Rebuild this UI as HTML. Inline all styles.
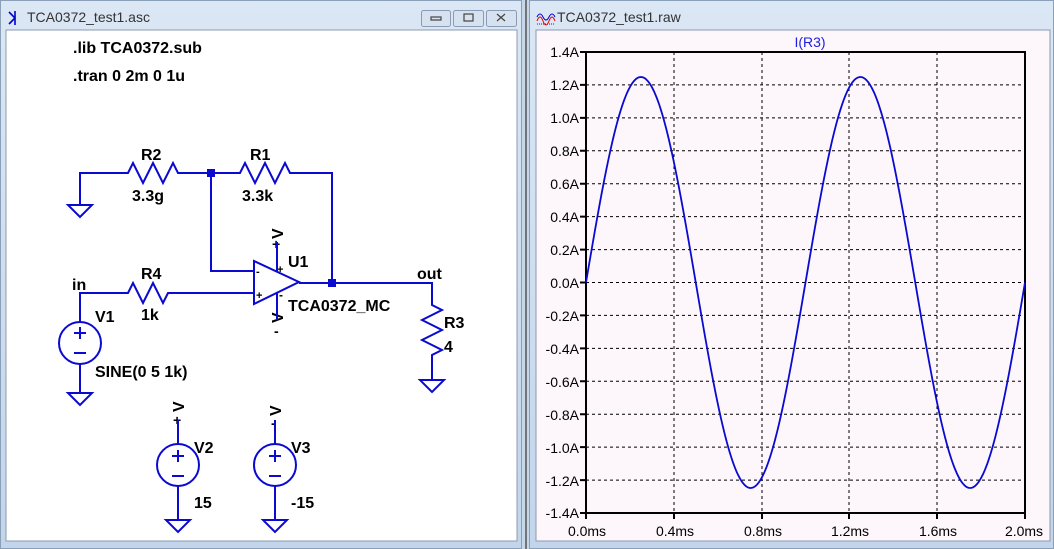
<!DOCTYPE html>
<html><head><meta charset="utf-8"><style>
body{margin:0;width:1054px;height:549px;overflow:hidden;background:#c6d7ea;font-family:"Liberation Sans",sans-serif}
svg{position:absolute;left:0;top:0}
</style></head><body>
<svg width="1054" height="549" viewBox="0 0 1054 549">
<defs>
<linearGradient id="tb" x1="0" y1="0" x2="0" y2="1"><stop offset="0" stop-color="#dbe7f4"/><stop offset="1" stop-color="#c3d5ea"/></linearGradient>
</defs>
<!-- left window -->
<rect x="0" y="0" width="522" height="549" fill="url(#tb)"/>
<rect x="0.5" y="0.5" width="521" height="548" fill="none" stroke="#8aa0b8"/>
<rect x="6" y="30" width="511" height="511" fill="#fff" stroke="#8a9bb0"/>
<text x="27" y="22" font-size="14" fill="#333">TCA0372_test1.asc</text>
<path d="M9 12 l6 6 l-6 6 M15 11 v14" stroke="#0000cc" stroke-width="1.6" fill="none"/>
<!-- buttons -->
<g fill="#d6e2ef" stroke="#8a9cb4">
<rect x="421.5" y="10.5" width="29" height="16" rx="2"/><rect x="453.5" y="10.5" width="30" height="16" rx="2"/><rect x="486.5" y="10.5" width="30" height="16" rx="2"/>
<rect x="951.5" y="10.5" width="29" height="16" rx="2"/><rect x="984.5" y="10.5" width="30" height="16" rx="2"/><rect x="1017.5" y="10.5" width="30" height="16" rx="2"/>
</g>
<g stroke="#444" fill="none" stroke-width="1.2">
<rect x="431" y="17" width="10" height="3"/><rect x="464" y="14" width="9" height="7"/><path d="M497 14 l8 7 M505 14 l-8 7"/>
<rect x="961" y="17" width="10" height="3"/><rect x="995" y="14" width="9" height="7"/><path d="M1028 14 l8 7 M1036 14 l-8 7"/>
</g>
<!-- splitter -->
<rect x="522" y="0" width="7" height="549" fill="#c6d7ea"/>
<line x1="526" y1="0" x2="526" y2="549" stroke="#555" stroke-width="1.5"/>
<!-- right window -->
<rect x="529" y="0" width="525" height="549" fill="url(#tb)"/>
<rect x="529.5" y="0.5" width="524" height="548" fill="none" stroke="#8aa0b8"/>
<rect x="536" y="30" width="514" height="511" fill="#fdf6fb" stroke="#8a9bb0"/>
<text x="557" y="22" font-size="14" fill="#333">TCA0372_test1.raw</text>
<path d="M537 21 q3 -8 6 0 t6 0 t6 0" stroke="#d00" fill="none"/><path d="M537 17 q3 -6 6 0 t6 0 t6 0" stroke="#00c" fill="none"/>
<path d="M537 24 h18" stroke="#333" stroke-dasharray="1,1"/>

<!-- schematic -->
<g font-family="Liberation Sans,sans-serif" font-weight="bold" font-size="16" fill="#000">
<text x="73" y="53">.lib TCA0372.sub</text>
<text x="73" y="81">.tran 0 2m 0 1u</text>
<text x="141" y="160">R2</text><text x="132" y="201">3.3g</text>
<text x="250" y="160">R1</text><text x="242" y="201">3.3k</text>
<text x="141" y="279">R4</text><text x="141" y="320">1k</text>
<text x="72" y="290">in</text>
<text x="95" y="322">V1</text>
<text x="95" y="377">SINE(0 5 1k)</text>
<text x="288" y="267">U1</text>
<text x="288" y="311">TCA0372_MC</text>
<text x="417" y="279">out</text>
<text x="444" y="328">R3</text><text x="444" y="352">4</text>
<text x="194" y="453">V2</text><text x="194" y="508">15</text>
<text x="291" y="453">V3</text><text x="291" y="508">-15</text>
<text transform="translate(283,239) rotate(-90)">V</text>
<text transform="translate(283,323) rotate(-90)">V</text>
<text transform="translate(184,412) rotate(-90)">V</text>
<text transform="translate(281,416) rotate(-90)">V</text>
</g>
<g font-family="Liberation Sans,sans-serif" font-weight="bold" font-size="14" fill="#000">
<text x="272" y="249">+</text><text x="274" y="336">-</text>
<text x="173" y="425">+</text><text x="271" y="428">-</text>
<text x="256" y="275" font-size="11">-</text><text x="256" y="299" font-size="11">+</text>
<text x="277" y="273" font-size="11">+</text><text x="279" y="299" font-size="12">-</text>
</g>
<g stroke="#0a0ad0" stroke-width="2" fill="none">
<path d="M80 205 V173 H128 l5 -10 l10 20 l10 -20 l10 20 l10 -20 l5 10 H240 l5 -10 l10 20 l10 -20 l10 20 l10 -20 l5 10 H332 V283"/>
<path d="M211 173 V271 H254"/>
<path d="M80 323 V293 H128 l5 -10 l10 20 l10 -20 l10 20 l5 -10 H254"/>
<circle cx="80" cy="343" r="21"/>
<path d="M80 364 V393"/>
<path d="M74 333 h12 M80 327 v12 M74 353 h12"/>
<path d="M254 261 V304 L299 282 Z"/>
<path d="M277 242 V272 M277 292 V320"/>
<path d="M299 283 H432 V305 l10 5 l-20 10 l20 10 l-20 10 l20 10 l-10 5 V380"/>
<path d="M178 420 V445 M178 486 V520"/><circle cx="178" cy="465" r="21"/>
<path d="M172 456 h12 M178 450 v12 M172 476 h12"/>
<path d="M275 420 V445 M275 486 V520"/><circle cx="275" cy="465" r="21"/>
<path d="M269 456 h12 M275 450 v12 M269 476 h12"/>
<path d="M68 205 h24 l-12 12 z M68 393 h24 l-12 12 z M420 380 h24 l-12 12 z M166 520 h24 l-12 12 z M263 520 h24 l-12 12 z"/>
</g>
<rect x="207" y="169" width="8" height="8" fill="#0a0ad0"/>
<rect x="328" y="279" width="8" height="8" fill="#0a0ad0"/>

<!-- plot -->
<text x="810" y="47" font-size="14" fill="#2020e0" text-anchor="middle">I(R3)</text>
<g stroke="#000" stroke-width="1" stroke-dasharray="3,3">
<path d="M674 52V513M762 52V513M849 52V513M937 52V513"/>
<path d="M586 84.9H1025M586 117.9H1025M586 150.8H1025M586 183.7H1025M586 216.6H1025M586 249.6H1025M586 282.5H1025M586 315.4H1025M586 348.4H1025M586 381.3H1025M586 414.2H1025M586 447.1H1025M586 480.1H1025"/>
</g>
<rect x="586" y="52" width="439" height="461" fill="none" stroke="#000" stroke-width="2"/>
<g stroke="#000" stroke-width="2">
<path d="M580 52h6M580 84.9h6M580 117.9h6M580 150.8h6M580 183.7h6M580 216.6h6M580 249.6h6M580 282.5h6M580 315.4h6M580 348.4h6M580 381.3h6M580 414.2h6M580 447.1h6M580 480.1h6M580 513h6"/>
<path d="M586 513v6M674 513v6M762 513v6M849 513v6M937 513v6M1025 513v6"/>
</g>
<g font-size="14" fill="#000" text-anchor="end">
<text x="579" y="57">1.4A</text><text x="579" y="90">1.2A</text><text x="579" y="123">1.0A</text><text x="579" y="156">0.8A</text><text x="579" y="189">0.6A</text><text x="579" y="222">0.4A</text><text x="579" y="255">0.2A</text><text x="579" y="288">0.0A</text><text x="579" y="321">-0.2A</text><text x="579" y="354">-0.4A</text><text x="579" y="387">-0.6A</text><text x="579" y="420">-0.8A</text><text x="579" y="453">-1.0A</text><text x="579" y="486">-1.2A</text><text x="579" y="518">-1.4A</text>
</g>
<g font-size="14" fill="#000" text-anchor="middle">
<text x="587" y="536">0.0ms</text><text x="675" y="536">0.4ms</text><text x="763" y="536">0.8ms</text><text x="850" y="536">1.2ms</text><text x="938" y="536">1.6ms</text><text x="1024" y="536">2.0ms</text>
</g>
<path id="sine" stroke="#0a0ad0" stroke-width="1.8" fill="none" d=""/>
</svg>
<script>
var d="";for(var i=0;i<=439;i++){var x=586+i;var y=282.5-205.5*Math.sin(2*Math.PI*i/219.5);d+=(i?"L":"M")+x+" "+y.toFixed(1);}
document.getElementById("sine").setAttribute("d",d);
</script>
</body></html>
